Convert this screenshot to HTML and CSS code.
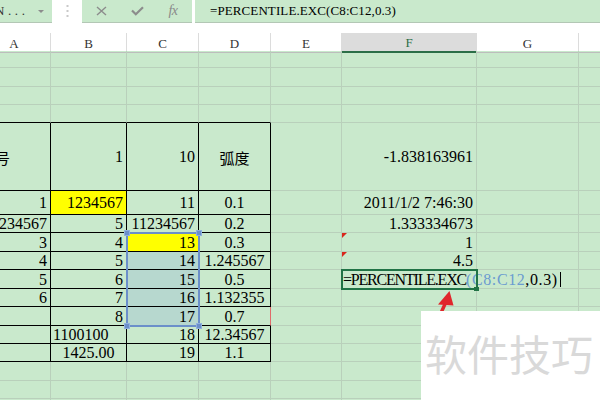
FILE: index.html
```html
<!DOCTYPE html>
<html lang="zh-CN">
<head>
<meta charset="utf-8">
<title>PERCENTILE.EXC</title>
<link rel="stylesheet" href="styles.css">
</head>
<body>
<div class="bar">
  <div class="namebox"><span class="nm">N...</span><span class="dd"></span></div>
  <div class="grip">
    <svg width="3" height="12" viewBox="0 0 3 12"><rect x="0.5" y="0" width="2" height="2" fill="#c9c9c9"/><rect x="0.5" y="5" width="2" height="2" fill="#c9c9c9"/><rect x="0.5" y="10" width="2" height="2" fill="#c9c9c9"/></svg>
  </div>
  <div class="fxbox">
    <span class="ico"><svg width="11" height="10" viewBox="0 0 11 10"><path d="M1 1L10 9M10 1L1 9" stroke="#8c8c8c" stroke-width="1.4" fill="none"/></svg></span>
    <span class="ico"><svg width="13" height="10" viewBox="0 0 13 10"><path d="M1 4.5L4.8 8.3L12 1.2" stroke="#8c8c8c" stroke-width="2.2" fill="none"/></svg></span>
    <span class="ico fx">fx</span>
  </div>
  <div class="formula">=PERCENTILE.EXC(C8:C12,0.3)</div>
</div>

<div class="head">
  <div class="h">A</div><div class="h">B</div><div class="h">C</div><div class="h">D</div><div class="h">E</div><div class="h on">F</div><div class="h">G</div><div class="h"></div>
</div>

<div class="sheet">
  <!-- r1 -->
  <div class="c"></div><div class="c"></div><div class="c"></div><div class="c"></div><div class="c"></div><div class="c"></div><div class="c"></div><div class="c"></div>
  <!-- r2 -->
  <div class="c"></div><div class="c"></div><div class="c"></div><div class="c"></div><div class="c"></div><div class="c"></div><div class="c"></div><div class="c"></div>
  <!-- r3 -->
  <div class="c"></div><div class="c"></div><div class="c"></div><div class="c"></div><div class="c"></div><div class="c"></div><div class="c"></div><div class="c"></div>
  <!-- r4 -->
  <div class="c kb"></div><div class="c kb"></div><div class="c kb"></div><div class="c kb"></div><div class="c"></div><div class="c"></div><div class="c"></div><div class="c"></div>
  <!-- r5 -->
  <div class="c k lt cjk">序号</div><div class="c k">1</div><div class="c k">10</div><div class="c k ct cjk">弧度</div><div class="c"></div><div class="c">-1.838163961</div><div class="c"></div><div class="c"></div>
  <!-- r6 -->
  <div class="c k">1</div><div class="c k y">1234567</div><div class="c k">11</div><div class="c k ct">0.1</div><div class="c"></div><div class="c">2011/1/2 7:46:30</div><div class="c"></div><div class="c"></div>
  <!-- r7 -->
  <div class="c k">1234567</div><div class="c k">5</div><div class="c k">11234567</div><div class="c k ct">0.2</div><div class="c"></div><div class="c">1.333334673</div><div class="c"></div><div class="c"></div>
  <!-- r8 -->
  <div class="c k">3</div><div class="c k">4</div><div class="c k y">13<div class="selbox"><i class="hd tl"></i><i class="hd tr"></i><i class="hd bl"></i><i class="hd br"></i></div></div><div class="c k ct">0.3</div><div class="c"></div><div class="c note">1</div><div class="c"></div><div class="c"></div>
  <!-- r9 -->
  <div class="c k">4</div><div class="c k">5</div><div class="c k s">14</div><div class="c k ct">1.245567</div><div class="c"></div><div class="c note">4.5</div><div class="c"></div><div class="c"></div>
  <!-- r10 -->
  <div class="c k">5</div><div class="c k">6</div><div class="c k s">15</div><div class="c k ct">0.5</div><div class="c"></div><div class="c lt active"><span class="fn">=PERCENTILE.EXC</span><span class="ref">(C8:C12</span><span class="args">,0.3)</span><i class="caret"></i></div><div class="c"></div><div class="c"></div>
  <!-- r11 -->
  <div class="c k">6</div><div class="c k">7</div><div class="c k s">16</div><div class="c k ct">1.132355</div><div class="c"></div><div class="c"></div><div class="c"></div><div class="c"></div>
  <!-- r12 -->
  <div class="c k"></div><div class="c k">8</div><div class="c k s">17</div><div class="c k ct rm">0.7</div><div class="c"></div><div class="c"></div><div class="c"></div><div class="c"></div>
  <!-- r13 -->
  <div class="c k"></div><div class="c k lt">1100100</div><div class="c k">18</div><div class="c k ct">12.34567</div><div class="c"></div><div class="c"></div><div class="c"></div><div class="c"></div>
  <!-- r14 -->
  <div class="c k"></div><div class="c k ct">1425.00</div><div class="c k">19</div><div class="c k ct">1.1</div><div class="c"></div><div class="c"></div><div class="c"></div><div class="c"></div>
  <!-- r15 -->
  <div class="c"></div><div class="c"></div><div class="c"></div><div class="c"></div><div class="c"></div><div class="c"></div><div class="c"></div><div class="c"></div>
  <!-- r16 -->
  <div class="c"></div><div class="c"></div><div class="c"></div><div class="c"></div><div class="c"></div><div class="c"></div><div class="c"></div><div class="c"></div>
  <!-- r17 -->
  <div class="c"></div><div class="c"></div><div class="c"></div><div class="c"></div><div class="c"></div><div class="c"></div><div class="c"></div><div class="c"></div>
</div>

<svg class="arrow" width="30" height="30" viewBox="0 0 30 30">
  <path d="M15.5 17L10.5 28" stroke="#e0262b" stroke-width="3.4" fill="none"/>
  <polygon points="19.5,5 8,18.5 23.5,19.5" fill="#e0262b"/>
</svg>

<div class="mark">软件技巧</div>
</body>
</html>
```

FILE: styles.css
```css
html, body {
  margin: 0;
  width: 600px;
  height: 400px;
  overflow: hidden;
  background: #ffffff;
}

body {
  position: relative;
  font-family: "Liberation Serif", "Noto Sans CJK SC", serif;
  color: #000;
}

/* ---------- formula toolbar ---------- */
.bar {
  display: flex;
  height: 23px;
}

.namebox {
  width: 52px;
  box-sizing: border-box;
  background: #c9e9cc;
  border-bottom: 1px solid #b3c7b5;
  display: flex;
  align-items: center;
  overflow: hidden;
  font-size: 13px;
  color: #333;
}

.nm {
  margin-left: -5px;
  letter-spacing: 3.6px;
  white-space: nowrap;
}

.dd {
  margin-left: auto;
  margin-right: 8px;
  width: 0;
  height: 0;
  border-left: 3px solid transparent;
  border-right: 3px solid transparent;
  border-top: 3px solid #8c8c8c;
}

.grip {
  width: 30px;
  display: flex;
  align-items: center;
  justify-content: center;
  padding-bottom: 2px;
}

.fxbox {
  width: 110px;
  box-sizing: border-box;
  background: #c9e9cc;
  border-bottom: 1px solid #b3c7b5;
  display: flex;
  align-items: center;
  padding-left: 1px;
}

.ico {
  width: 36px;
  display: flex;
  justify-content: center;
  align-items: center;
}

.fx {
  font-style: italic;
  font-size: 14px;
  color: #8a8a8a;
  letter-spacing: -0.5px;
}

.formula {
  flex: 1;
  margin-left: 3px;
  box-sizing: border-box;
  background: #c9e9cc;
  border-bottom: 1px solid #b3c7b5;
  display: flex;
  align-items: center;
  padding-left: 15px;
  font-size: 13px;
  letter-spacing: 0.1px;
  white-space: nowrap;
}

/* ---------- column headers ---------- */
.head {
  display: grid;
  grid-template-columns: 73px 76px 72px 72px 71px 135px 102px 100px;
  height: 18px;
  margin-top: 10px;
  margin-left: -22px;
}

.h {
  border-right: 1px solid #dcdcdc;
  border-bottom: 1px solid #bdbdbd;
  display: flex;
  align-items: center;
  justify-content: center;
  font-size: 13px;
  color: #333;
  padding-top: 2px;
}

.h.on {
  background: #dcdcdc;
  border-bottom: 2px solid #2b6e47;
  color: #2b6e47;
}

/* ---------- sheet ---------- */
.sheet {
  display: grid;
  grid-template-columns: 73px 76px 72px 72px 71px 135px 102px 100px;
  grid-template-rows: 17px 19px 18px 18px 68px 24px 18px 19px 18px 19px 18px 19px 18px 18px 19px 18px 18px;
  margin-left: -22px;
  background: #c9e9cc;
}

.c {
  position: relative;
  min-width: 0;
  border-right: 1px solid #b9d0bb;
  border-bottom: 1px solid #b9d0bb;
  display: flex;
  align-items: center;
  justify-content: flex-end;
  padding: 1px 3px 0 3px;
  white-space: nowrap;
  font-size: 16px;
  line-height: 1;
}

.k {
  border-right-color: #000;
  border-bottom-color: #000;
}

.kb {
  border-bottom-color: #000;
}

.lt {
  justify-content: flex-start;
  padding-left: 2px;
}

.ct {
  justify-content: center;
}

.cjk {
  font-family: "Noto Sans CJK SC", sans-serif;
  font-size: 15px;
}

.y {
  background: #ffff00;
}

.s {
  background: #b7d8cf;
}

.rm {
  border-right-color: #e06a6a;
}

.note::before {
  content: "";
  position: absolute;
  left: 0;
  top: 0;
  width: 0;
  height: 0;
  border-top: 5px solid #d9261c;
  border-right: 5px solid transparent;
}

.active {
  outline: 2px solid #217346;
  outline-offset: -1px;
  z-index: 1;
  padding-left: 1px;
}

.active .fn {
  letter-spacing: -1.2px;
}

.active .ref,
.active .args {
  letter-spacing: 0.6px;
}

.active::after {
  content: "";
  position: absolute;
  right: -3px;
  bottom: -3px;
  width: 5px;
  height: 4px;
  background: #217346;
  z-index: 2;
}

.ref {
  color: #6b9bd0;
}

.caret {
  display: inline-block;
  width: 0;
  height: 15px;
  border-left: 1px solid #000;
  margin-left: 2px;
}

/* selection box C8:C12 drawn over the cells */
.selbox {
  position: absolute;
  left: -1px;
  top: -1px;
  width: 74px;
  height: 95px;
  box-sizing: border-box;
  border: 2px solid #6b8fca;
  z-index: 1;
}

.hd {
  position: absolute;
  width: 6px;
  height: 6px;
  box-sizing: border-box;
  background: #6b8fca;
  border: 1px solid #8fb0df;
}

.hd.tl { left: -4px; top: -4px; }
.hd.tr { right: -4px; top: -4px; }
.hd.bl { left: -4px; bottom: -4px; }
.hd.br { right: -4px; bottom: -4px; }

/* ---------- overlays ---------- */
.arrow {
  position: absolute;
  left: 430px;
  top: 286px;
  z-index: 3;
}

.mark {
  position: absolute;
  left: 421px;
  top: 311px;
  right: 0;
  bottom: 0;
  z-index: 4;
  background: #ffffff;
  box-sizing: border-box;
  padding: 21px 0 0 4px;
  font-family: "Noto Sans CJK SC", sans-serif;
  font-size: 42px;
  line-height: 1;
  color: #d9d9d9;
  white-space: nowrap;
}
```
